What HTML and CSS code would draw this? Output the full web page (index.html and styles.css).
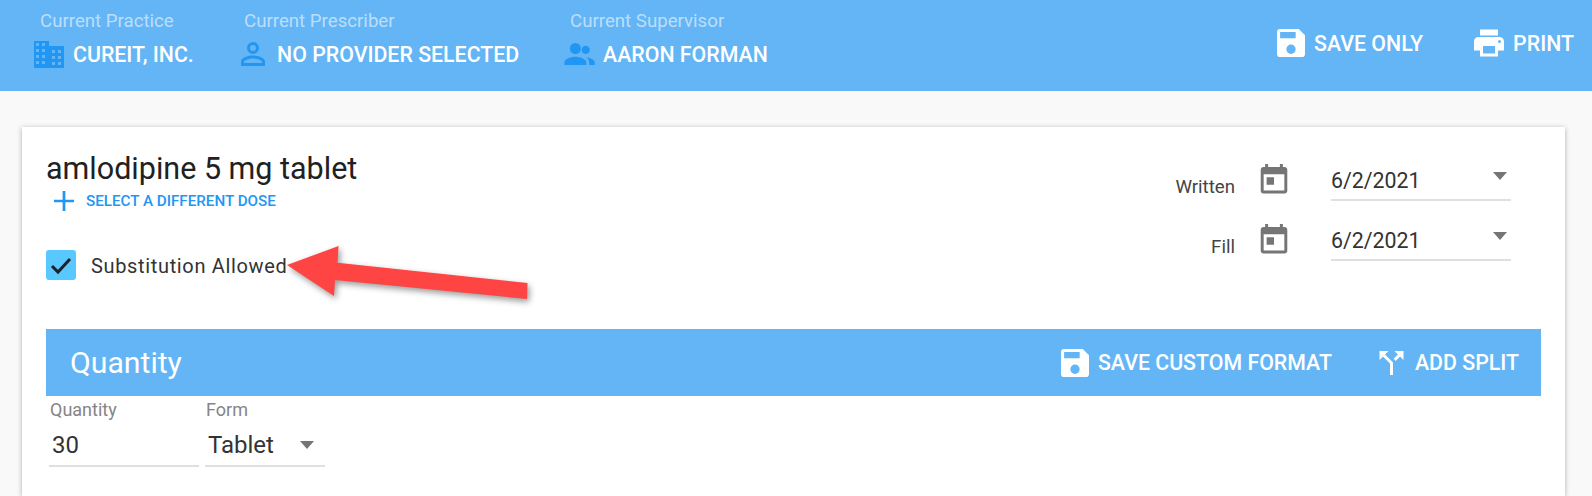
FILE: index.html
```html
<!DOCTYPE html>
<html lang="en">
<head>
<meta charset="utf-8">
<title>Prescription</title>
<link rel="stylesheet" href="styles.css">
</head>
<body>
<header class="topbar">
  <div class="ctx ctx-practice">
    <div class="ctx-label">Current Practice</div>
    <div class="ctx-value">
      <svg class="ctx-icon" viewBox="0 0 30 27"><path fill-rule="evenodd" d="M0 0h15v5h15v22H0zM2 2v3h3V2zm6 0v3h3V2zM2 8v3h3V8zm6 0v3h3V8zm10 1v3h3V9zm6 0v3h3V9zM2 14v3h3v-3zm6 0v3h3v-3zm10 1v3h3v-3zm6 0v3h3v-3zM2 20v3h3v-3zm6 0v3h3v-3zm10 1v3h3v-3zm6 0v3h3v-3z"/></svg>
      <span>CUREIT, INC.</span>
    </div>
  </div>
  <div class="ctx ctx-prescriber">
    <div class="ctx-label">Current Prescriber</div>
    <div class="ctx-value">
      <svg class="ctx-icon" viewBox="4 4 16 16"><path d="M12 4a4 4 0 1 1 0 8 4 4 0 0 1 0-8zm0 2a2 2 0 1 0 0 4 2 2 0 0 0 0-4zm0 7c2.700 0 8 1.300 8 4v3H4v-3c0-2.700 5.300-4 8-4zm0 2c-3 0-6 1.400-6 2v1h12v-1c0-.6-3-2-6-2z"/></svg>
      <span>NO PROVIDER SELECTED</span>
    </div>
  </div>
  <div class="ctx ctx-supervisor">
    <div class="ctx-label">Current Supervisor</div>
    <div class="ctx-value">
      <svg class="ctx-icon" viewBox="1 3 22 16"><path d="M16.500 11a3 3 0 1 0 0-6 3 3 0 0 0 0 6zM9 11a4 4 0 1 0 0-8 4 4 0 0 0 0 8zm0 2c-3 0-8 1.500-8 4v2h16v-2c0-2.500-5-4-8-4zm7.500.2c2.500.4 6.500 1.700 6.500 3.800v2h-4v-2c0-1.600-1-2.900-2.500-3.800z"/></svg>
      <span>AARON FORMAN</span>
    </div>
  </div>
  <div class="top-actions">
    <div class="action">
      <svg class="action-icon" viewBox="3 3 18 18"><path d="M17 3H5a2 2 0 0 0-2 2v14a2 2 0 0 0 2 2h14a2 2 0 0 0 2-2V7zm-5 16a3 3 0 1 1 0-6 3 3 0 0 1 0 6zm3-10H5V5h10z"/></svg>
      <span>SAVE ONLY</span>
    </div>
    <div class="action">
      <svg class="action-icon action-icon-print" viewBox="2 3 20 18"><path d="M19 8H5a3 3 0 0 0-3 3v6h4v4h12v-4h4v-6a3 3 0 0 0-3-3zm-3 11H8v-5h8zm3-7a1 1 0 1 1 0-2 1 1 0 0 1 0 2zm-1-9H6v4h12z"/></svg>
      <span>PRINT</span>
    </div>
  </div>
</header>

<main class="card">
  <section class="rx-head">
    <div class="rx-info">
      <h1 class="drug">amlodipine 5 mg tablet</h1>
      <div class="dose-link">
        <svg class="plus" viewBox="0 0 22 22"><path d="M9.500 0h3v9.500H22v3h-9.500V22h-3v-9.500H0v-3h9.500z"/></svg>
        <span>SELECT A DIFFERENT DOSE</span>
      </div>
      <label class="subst">
        <span class="check"><svg viewBox="0 0 30 30"><path d="M6 16l6 6L24 9" fill="none" stroke="#1b2228" stroke-width="3"/></svg></span>
        <span class="subst-text">Substitution Allowed</span>
      </label>
    </div>
    <div class="dates">
      <div class="date-row">
        <span class="date-label">Written</span>
        <svg class="cal" viewBox="3 1 18 21"><path d="M19 3h-1V1h-2v2H8V1H6v2H5a2 2 0 0 0-2 2v14a2 2 0 0 0 2 2h14a2 2 0 0 0 2-2V5a2 2 0 0 0-2-2zm0 16H5V8h14zM7 10h5v5H7z"/></svg>
        <div class="date-select"><span>6/2/2021</span><i class="caret"></i></div>
      </div>
      <div class="date-row">
        <span class="date-label">Fill</span>
        <svg class="cal" viewBox="3 1 18 21"><path d="M19 3h-1V1h-2v2H8V1H6v2H5a2 2 0 0 0-2 2v14a2 2 0 0 0 2 2h14a2 2 0 0 0 2-2V5a2 2 0 0 0-2-2zm0 16H5V8h14zM7 10h5v5H7z"/></svg>
        <div class="date-select"><span>6/2/2021</span><i class="caret"></i></div>
      </div>
    </div>
  </section>

  <section class="bar">
    <h2 class="bar-title">Quantity</h2>
    <div class="bar-actions">
      <div class="action">
        <svg class="action-icon" viewBox="3 3 18 18"><path d="M17 3H5a2 2 0 0 0-2 2v14a2 2 0 0 0 2 2h14a2 2 0 0 0 2-2V7zm-5 16a3 3 0 1 1 0-6 3 3 0 0 1 0 6zm3-10H5V5h10z"/></svg>
        <span>SAVE CUSTOM FORMAT</span>
      </div>
      <div class="action action-split">
        <svg class="action-icon action-icon-split" viewBox="4 4 16 16"><path d="M14 4l2.300 2.300-2.900 2.900 1.400 1.400 2.900-2.900L20 10V4zM10 4H4v6l2.300-2.300L11 12.400V20h2v-8.400L7.700 6.300z"/></svg>
        <span>ADD SPLIT</span>
      </div>
    </div>
  </section>

  <section class="fields">
    <div class="field field-qty">
      <div class="field-label">Quantity</div>
      <div class="field-input"><span>30</span></div>
    </div>
    <div class="field field-form">
      <div class="field-label">Form</div>
      <div class="field-input"><span>Tablet</span><i class="caret"></i></div>
    </div>
  </section>
</main>

<svg class="arrow" viewBox="0 0 300 80" aria-hidden="true"><path d="M7 35 58.600 16 57.500 32.700 247.500 53 247 69 55 50 54 66z"/></svg>
</body>
</html>
```
FILE: styles.css
```css
* { box-sizing: border-box; }
html, body { margin: 0; height: 100%; overflow: hidden; }
body {
  position: relative;
  display: flex;
  flex-direction: column;
  background: #f9f9f9;
  font-family: Roboto, "Liberation Sans", sans-serif;
  color: #212121;
}
.topbar {
  flex: none;
  height: 91px;
  background: #64b5f6;
  display: flex;
  align-items: flex-start;
  color: #fff;
}
.ctx { display: flex; flex-direction: column; }
.ctx-practice { margin-left: 34px; width: 207px; }
.ctx-prescriber { width: 323px; }
.ctx-label {
  margin: 11px 0 0 6px;
  font-size: 18.670px;
  line-height: 20px;
  color: #bbdefb;
}
.ctx-prescriber .ctx-label { margin-left: 3px; }
.ctx-value {
  display: flex;
  align-items: center;
  gap: 9px;
  margin-top: 8px;
  height: 30px;
  font-size: 21.330px;
  font-weight: 500;
}
.ctx-icon { height: 24px; width: 24px; fill: #2196f3; flex: none; }
.ctx-practice .ctx-icon { height: 27px; width: 30px; }
.ctx-prescriber .ctx-value { gap: 12px; }
.ctx-supervisor .ctx-value { gap: 8px; }
.ctx-supervisor .ctx-icon { height: 22px; width: 31px; }
.top-actions { margin-left: auto; margin-right: 18px; margin-top: 29px; display: flex; gap: 51px; }
.action { display: flex; align-items: center; gap: 9px; font-size: 21.330px; font-weight: 500; color: #fff; white-space: nowrap; }
.action-icon { width: 28px; height: 28px; fill: #fff; flex: none; }
.action-icon-print { width: 30px; }
.action-icon-split { width: 25px; height: 24px; }
.action-split { gap: 11px; }

.card {
  flex: 1;
  margin: 36px 27px 0 22px;
  background: #fff;
  box-shadow: 0 1px 5px rgba(0, 0, 0, .3);
  padding: 0 24px;
}
.rx-head { display: flex; justify-content: space-between; height: 202px; }
.rx-info { padding-top: 25px; }
.drug { margin: 0; font-size: 30.500px; line-height: 34px; font-weight: 400; color: #212121; }
.dose-link { display: flex; align-items: center; gap: 11px; margin: 5px 0 0 7px; height: 20px; font-size: 15.200px; font-weight: 500; color: #2196f3; }
.plus { width: 22px; height: 20px; fill: #2196f3; }
.subst { display: flex; align-items: center; gap: 15px; margin-top: 39px; font-size: 20px; letter-spacing: .65px; color: #333; }
.subst-text { padding-top: 2px; }
.check { width: 30px; height: 30px; border-radius: 3px; background: #59c8ff; display: block; }
.check svg { display: block; width: 30px; height: 30px; }

.dates { padding-top: 37px; margin-right: 30px; display: flex; flex-direction: column; }
.date-row { display: flex; align-items: flex-start; height: 60px; }
.date-label { width: 121px; text-align: right; font-size: 18.670px; line-height: 20px; margin-top: 13px; color: #444; }
.cal { width: 28px; height: 31px; fill: #757575; margin: 0 43px 0 25px; }
.date-select {
  width: 180px;
  height: 37px;
  border-bottom: 2px solid #e0e0e0;
  display: flex;
  align-items: flex-start;
  justify-content: space-between;
  padding: 5px 4px 0 0;
  font-size: 21.330px;
  line-height: 24px;
  color: #333;
}
.caret { width: 0; height: 0; border: 7.500px solid transparent; border-top: 8px solid #757575; border-bottom: 0; display: block; margin-top: 3px; }

.bar {
  height: 67px;
  background: #64b5f6;
  color: #fff;
  display: flex;
  align-items: center;
  justify-content: space-between;
  padding: 0 22px 0 24px;
}
.bar-title { margin: 0; font-size: 30.200px; font-weight: 400; }
.bar-actions { display: flex; gap: 47px; }

.fields { display: flex; gap: 6px; padding: 4px 0 0 3px; }
.field-label { font-size: 18px; line-height: 20px; color: #858585; padding-left: 1px; }
.field-qty { width: 150px; }
.field-form { width: 120px; }
.field-input {
  height: 47px;
  border-bottom: 2px solid #e0e0e0;
  display: flex;
  justify-content: space-between;
  align-items: center;
  padding: 4px 11px 0 3px;
  font-size: 24px;
  color: #333;
}
.field-input .caret { margin: 0; }

.arrow {
  position: absolute;
  left: 280px;
  top: 230px;
  width: 300px;
  height: 80px;
  fill: #ff4444;
  filter: drop-shadow(2px 3px 3px rgba(0, 0, 0, .4));
}
```
